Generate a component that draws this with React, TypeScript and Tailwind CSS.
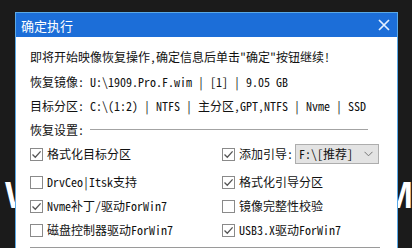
import React from "react";

const cjk = "font-['Noto_Sans_Mono_CJK_SC','Noto_Sans_CJK_SC',monospace]";

/*** 复选框 ***/
function Check({ checked, label }: { checked: boolean; label: string }) {
  return (
    <div className="flex h-full items-center">
      <span className="flex h-[13px] w-[13px] shrink-0 items-center justify-center border border-[#8a8a8a] bg-white">
        {checked && (
          <svg width="11" height="11" viewBox="0 0 11 11">
            <path d="M1.5 5.5 L4.3 8.3 L9.6 2.4" fill="none" stroke="#555" strokeWidth="1.3" />
          </svg>
        )}
      </span>
      <span className="ml-[4px] text-[12px] leading-none text-[#111]">{label}</span>
    </div>
  );
}

export default function App() {
  return (
    <div className={`relative h-[248px] w-[412px] overflow-hidden bg-[#1b1b1b] ${cjk}`}>
      {/*** 背景上的大字 (被对话框挡住) ***/}
      <span className="absolute left-[5px] top-[178px] font-['Liberation_Sans',sans-serif] text-[36px] font-bold leading-none text-white">
        W
      </span>
      <span className="absolute left-[383px] top-[178px] font-['Liberation_Sans',sans-serif] text-[36px] font-bold leading-none text-white">
        M
      </span>

      {/*** 对话框 ***/}
      <div className="relative ml-[15px] mt-[12px] w-[383px] border border-[#5aa9e6] bg-white">
        {/*** 标题栏 ***/}
        <div className="flex h-[24px] items-center justify-between bg-[#1c6ed8] pl-[5px] pr-[7px]">
          <span className="text-[13px] leading-none text-white">确定执行</span>
          <svg width="12" height="12" viewBox="0 0 12 12">
            <path d="M1 1 L11 11 M11 1 L1 11" stroke="#e4f0ff" strokeWidth="1.7" />
          </svg>
        </div>

        {/*** 内容 ***/}
        <div className="px-[14px] pt-[8px] text-[12px] leading-none text-[#111]">
          <div className="flex h-[24px] items-center">即将开始映像恢复操作,确定信息后单击"确定"按钮继续!</div>
          <div className="flex h-[25px] items-center whitespace-pre">恢复镜像: U:\1909.Pro.F.wim | [1] | 9.05 GB</div>
          <div className="flex h-[24px] items-center whitespace-pre">目标分区: C:\(1:2) | NTFS | 主分区,GPT,NTFS | Nvme | SSD</div>
          <div className="flex h-[23px] items-center">
            <span>恢复设置:</span>
            <span className="ml-[6px] h-px flex-1 bg-[#a3a3a3]" />
            <span className="w-[15px]" />
          </div>

          <div className="grid grid-cols-[192px_1fr]">
            <div className="h-[26px]">
              <Check checked label="格式化目标分区" />
            </div>
            <div className="flex h-[26px] items-center">
              <Check checked label="添加引导:" />
              <div className="ml-[2px] flex h-[20px] w-[84px] items-center justify-between border border-[#adadad] bg-[#e3e3e3] pl-[3px] pr-[5px]">
                <span className="text-[12px] leading-none text-[#111]">F:\[推荐]</span>
                <svg width="9" height="6" viewBox="0 0 9 6">
                  <path d="M0.5 0.8 L4.5 4.8 L8.5 0.8" fill="none" stroke="#777" strokeWidth="1" />
                </svg>
              </div>
            </div>

            <div className="mt-[3px] h-[24px]">
              <Check checked={false} label="DrvCeo|Itsk支持" />
            </div>
            <div className="mt-[3px] h-[24px]">
              <Check checked label="格式化引导分区" />
            </div>

            <div className="h-[24px]">
              <Check checked label="Nvme补丁/驱动ForWin7" />
            </div>
            <div className="h-[24px]">
              <Check checked={false} label="镜像完整性校验" />
            </div>

            <div className="h-[24px]">
              <Check checked={false} label="磁盘控制器驱动ForWin7" />
            </div>
            <div className="h-[24px]">
              <Check checked label="USB3.X驱动ForWin7" />
            </div>
          </div>

          <div className="mt-[5px] mr-[3px] h-[20px] border-t border-[#9a9a9a]" />
        </div>
      </div>
    </div>
  );
}
